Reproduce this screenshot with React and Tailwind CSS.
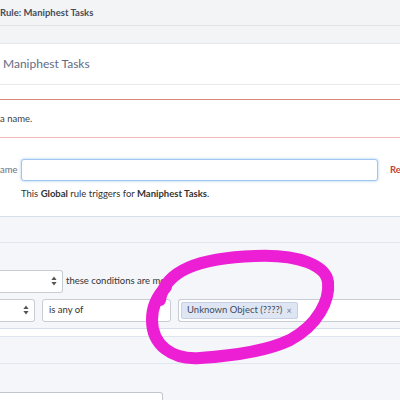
import React from "react";

function Arrows() {
  return (
    <svg width="6" height="10" viewBox="0 0 6 10" className="shrink-0">
      <path d="M3 0.5 L5.6 4 L0.4 4 Z" fill="#555" />
      <path d="M3 9.5 L5.6 6 L0.4 6 Z" fill="#555" />
    </svg>
  );
}

export default function App() {
  return (
    <div
      className="relative w-[400px] h-[400px] overflow-hidden bg-white text-[#333]"
      style={{ fontFamily: "Lato, 'Noto Sans', sans-serif" }}
    >
      {/* Crumb header */}
      <div className="h-[26px] bg-[#f3f4f6] border-b border-[#e2e4e8] flex items-center pt-[1px]">
        <span className="text-[9.5px] font-bold text-[#474b57] leading-none whitespace-nowrap">Rule: Maniphest Tasks</span>
      </div>
      <div className="h-[18px] bg-[#f3f4f6] border-b border-[#e4e6ea]" />

      {/* Title panel */}
      <div className="h-[41px] border-b border-[#e8e9ec] flex items-center pl-[3px]">
        <span className="text-[12px] text-[#626b84] leading-none">Maniphest Tasks</span>
      </div>
      <div className="h-[14px]" />

      {/* Error box */}
      <div className="h-[39px] border-t-[1.5px] border-t-[#d8867e] border-b border-b-[#f2b9b9] flex items-center">
        <span className="text-[9.5px] text-[#3b3d42] leading-none">a name.</span>
      </div>

      {/* Name field */}
      <div className="mt-[21px] flex items-center h-[22px]">
        <div className="w-[21px] shrink-0 text-right pr-[6px] text-[9.5px] text-[#6d717b] leading-none">ame</div>
        <div className="w-[357px] shrink-0 h-[22px] rounded-[3px] border border-[#9ec6f2] shadow-[0_0_3px_rgba(100,160,230,0.55)] bg-white" />
        <div className="ml-[12px] shrink-0 text-[9.5px] font-bold text-[#c0453b] leading-none whitespace-nowrap">Required</div>
      </div>
      <div className="mt-[8px] pl-[21px] text-[9.5px] text-[#333] leading-none whitespace-nowrap">
        This <b>Global</b> rule triggers for <b>Maniphest Tasks</b>.
      </div>

      {/* Conditions section */}
      <div className="mt-[17px] border-t border-[#d6dee9] bg-[#f5f6fa]">
        <div className="h-[26px] border-b border-[#e2e7ee]" />
        <div className="h-[27px]" />
        <div className="flex items-center h-[23px]">
          <div className="w-[63px] shrink-0 h-[23px] bg-white border border-[#c8ccd4] border-l-0 rounded-r-[3px] flex items-center justify-end pr-[5px]">
            <Arrows />
          </div>
          <span className="ml-[3px] text-[9.5px] text-[#333] leading-none whitespace-nowrap">these conditions are met:</span>
        </div>
        <div className="mt-[6px] flex items-center h-[23px]">
          <div className="w-[35px] shrink-0 h-[23px] bg-white border border-[#c8ccd4] border-l-0 rounded-r-[3px] flex items-center justify-end pr-[5px]">
            <Arrows />
          </div>
          <div className="ml-[7px] shrink-0 w-[129px] h-[23px] bg-white border border-[#c8ccd4] rounded-[3px] flex items-center pl-[6px]">
            <span className="text-[9.5px] text-[#333] leading-none">is any of</span>
          </div>
          <div className="ml-[7px] flex-1 h-[23px] bg-white border border-[#c8ccd4] rounded-l-[3px] border-r-0 flex items-center pl-[2px]">
            <div className="h-[17px] px-[5px] bg-[#dfe6f3] border border-[#c6d0e2] rounded-[2px] flex items-center gap-[4px]">
              <span className="text-[9.5px] text-[#434b5e] leading-none whitespace-nowrap">Unknown Object (????)</span>
              <span className="text-[9px] text-[#7a8294] leading-none">×</span>
            </div>
          </div>
        </div>
        <div className="mt-[6px] h-[9px] bg-white border-t border-[#d6dee9] border-b border-b-[#dfe5ee]" />
        <div className="h-[27px] border-b border-[#e2e8ef]" />
        <div className="h-[28px]" />
        <div className="w-[163px] h-[20px] bg-white border border-[#c2c6ce] border-l-0 rounded-r-[3px]" />
      </div>

      {/* Magenta annotation */}
      <svg
        className="absolute left-0 top-0 pointer-events-none"
        width="400"
        height="400"
        viewBox="0 0 400 400"
      >
        <path
          d="M160 300 C165 270 200 258 255 256 C300 254 326 266 328 282 C330 300 318 325 290 340 C265 352 230 356 200 358 C172 360 152 345 152 320 C152 305 158 295 166 287"
          fill="none"
          stroke="#ec1fd4"
          strokeWidth="12"
          strokeLinecap="round"
          strokeLinejoin="round"
        />
      </svg>
    </div>
  );
}
